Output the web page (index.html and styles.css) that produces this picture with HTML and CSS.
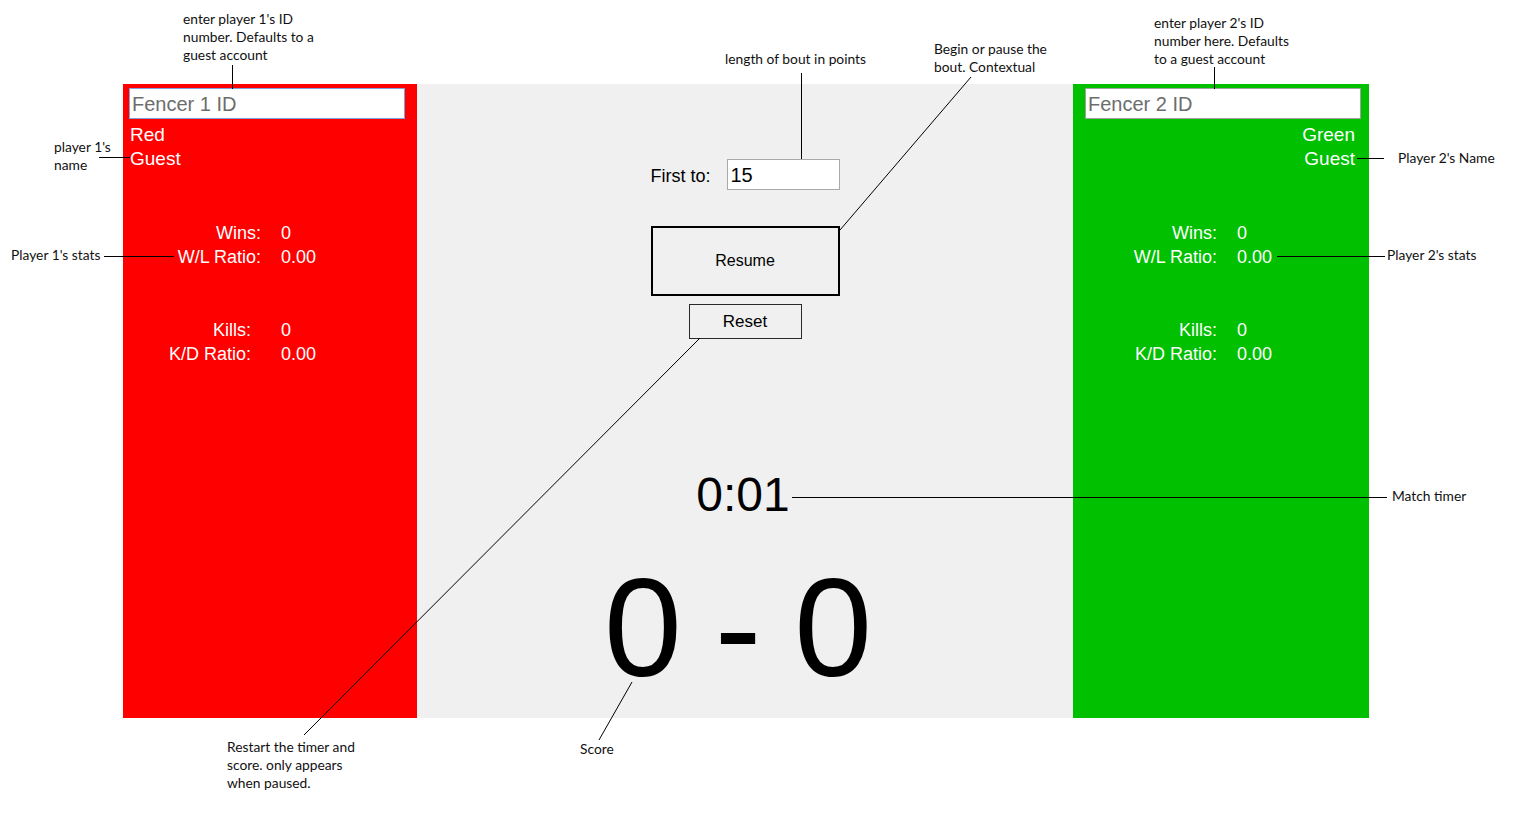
FILE: index.html
```html
<!DOCTYPE html>
<html lang="en">
<head>
<meta charset="utf-8">
<title>Fencing scoreboard</title>
<link rel="stylesheet" href="styles.css">
</head>
<body>
<div class="page">
  <div class="board">
    <section class="panel panel-red">
      <input class="fencer-input fencer-input-focus" type="text" placeholder="Fencer 1 ID">
      <div class="name">Red<br>Guest</div>
      <div class="stats stats-red">
        <span class="lbl">Wins:</span><span class="val">0</span>
        <span class="lbl">W/L Ratio:</span><span class="val">0.00</span>
      </div>
      <div class="stats stats-red stats-second">
        <span class="lbl lbl-shift">Kills:</span><span class="val">0</span>
        <span class="lbl lbl-shift">K/D Ratio:</span><span class="val">0.00</span>
      </div>
    </section>

    <section class="panel-center">
      <div class="first-to">
        <span class="first-label">First to:</span>
        <input class="bout-input" type="text" value="15">
      </div>
      <button class="btn-resume" type="button">Resume</button>
      <button class="btn-reset" type="button">Reset</button>
      <div class="timer">0:01</div>
      <div class="score">0 - 0</div>
    </section>

    <section class="panel panel-green">
      <input class="fencer-input" type="text" placeholder="Fencer 2 ID">
      <div class="name name-right">Green<br>Guest</div>
      <div class="stats stats-green">
        <span class="lbl">Wins:</span><span class="val">0</span>
        <span class="lbl">W/L Ratio:</span><span class="val">0.00</span>
      </div>
      <div class="stats stats-green stats-second">
        <span class="lbl">Kills:</span><span class="val">0</span>
        <span class="lbl">K/D Ratio:</span><span class="val">0.00</span>
      </div>
    </section>
  </div>

  <svg class="leaders" width="1518" height="826" viewBox="0 0 1518 826" aria-hidden="true">
    <g stroke="#000" stroke-width="1" fill="none">
      <line x1="232.5" y1="65" x2="232.5" y2="89"/>
      <line x1="99" y1="157.5" x2="130" y2="157.5"/>
      <line x1="104" y1="256.5" x2="174" y2="256.5"/>
      <line x1="801.5" y1="73" x2="801.5" y2="159"/>
      <line x1="971" y1="77" x2="840" y2="230"/>
      <line x1="1214.5" y1="67" x2="1214.5" y2="89"/>
      <line x1="1357" y1="158.5" x2="1384" y2="158.5"/>
      <line x1="1277" y1="256.5" x2="1385" y2="256.5"/>
      <line x1="792" y1="497.5" x2="1387" y2="497.5"/>
      <line x1="700" y1="338" x2="304" y2="735"/>
      <line x1="632" y1="682" x2="599" y2="740"/>
    </g>
  </svg>

  <p class="note note-id1">enter player 1's ID<br>number. Defaults to a<br>guest account</p>
  <p class="note note-name1">player 1's<br>name</p>
  <p class="note note-stats1">Player 1's stats</p>
  <p class="note note-bout">length of bout in points</p>
  <p class="note note-begin">Begin or pause the<br>bout. Contextual</p>
  <p class="note note-id2">enter player 2's ID<br>number here. Defaults<br>to a guest account</p>
  <p class="note note-name2">Player 2's Name</p>
  <p class="note note-stats2">Player 2's stats</p>
  <p class="note note-timer">Match timer</p>
  <p class="note note-reset">Restart the timer and<br>score. only appears<br>when paused.</p>
  <p class="note note-score">Score</p>
</div>
</body>
</html>
```

FILE: styles.css
```css
* { box-sizing: border-box; }

html, body {
  margin: 0;
  padding: 0;
  background: #ffffff;
}

body {
  font-family: "Liberation Sans", Arial, sans-serif;
  color: #000;
}

.page {
  position: relative;
  width: 1518px;
  height: 826px;
  overflow: hidden;
}

.board {
  display: flex;
  margin: 0 0 0 123px;
  padding-top: 84px;
  height: 718px;
}

.panel {
  height: 634px;
  color: #ffffff;
  padding-top: 4px;
}

.panel-red {
  width: 294px;
  background: #ff0000;
  padding-left: 6px;
  padding-right: 12px;
}

.panel-green {
  width: 296px;
  background: #00c000;
  padding-left: 12px;
  padding-right: 8px;
}

.fencer-input {
  display: block;
  width: 276px;
  height: 31px;
  margin: 0;
  padding: 1px 2px 0;
  border: 1px solid #a0a0a0;
  border-radius: 0;
  background: #ffffff;
  font-family: "Liberation Sans", Arial, sans-serif;
  font-size: 20px;
  color: #000;
  outline: none;
}

.fencer-input-focus {
  border-color: #7fa2d6;
}

.fencer-input::placeholder {
  color: #6d6d6d;
  opacity: 1;
}

.name {
  margin-top: 4px;
  padding-left: 1px;
  font-size: 19px;
  line-height: 24px;
}

.name-right {
  text-align: right;
  padding-left: 0;
  padding-right: 6px;
}

.stats {
  display: grid;
  grid-template-columns: 132px auto;
  column-gap: 20px;
  font-size: 18px;
  line-height: 24px;
  margin-top: 50px;
}

.stats-second {
  margin-top: 49px;
}

.lbl {
  text-align: right;
}

.lbl-shift {
  padding-right: 10px;
}

.panel-center {
  width: 656px;
  height: 634px;
  background: #f0f0f0;
  display: flex;
  flex-direction: column;
  align-items: center;
  padding-top: 75px;
}

.first-to {
  width: 189px;
  height: 31px;
  display: flex;
  justify-content: space-between;
  align-items: center;
}

.first-label {
  font-size: 18px;
  padding-top: 3px;
}

.bout-input {
  width: 113px;
  height: 31px;
  margin: 0;
  padding: 1px 3px 0;
  border: 1px solid #a9a9a9;
  border-radius: 0;
  background: #ffffff;
  font-family: "Liberation Sans", Arial, sans-serif;
  font-size: 20px;
  color: #000;
  outline: none;
}

.btn-resume {
  margin-top: 36px;
  width: 189px;
  height: 70px;
  border: 2px solid #000;
  border-radius: 0;
  background: transparent;
  font-family: "Liberation Sans", Arial, sans-serif;
  font-size: 16px;
  color: #000;
  padding: 0;
}

.btn-reset {
  margin-top: 8px;
  width: 113px;
  height: 35px;
  border: 1px solid #2a2a2a;
  border-radius: 0;
  background: transparent;
  font-family: "Liberation Sans", Arial, sans-serif;
  font-size: 17px;
  color: #000;
  padding: 0;
}

.timer {
  margin-top: 132px;
  font-size: 48px;
  line-height: 48px;
  padding-right: 4px;
}

.score {
  margin-top: 39px;
  font-size: 140px;
  line-height: 140px;
  word-spacing: -6px;
  padding-right: 14px;
}

.leaders {
  position: absolute;
  top: 0;
  left: 0;
  pointer-events: none;
}

.note {
  position: absolute;
  margin: 0;
  font-family: Lato, "Open Sans", sans-serif;
  font-size: 13.8px;
  line-height: 18px;
  color: #111;
  white-space: nowrap;
}

.note-id1 { left: 183px; top: 10px; }
.note-name1 { left: 54px; top: 138px; }
.note-stats1 { left: 11px; top: 246px; }
.note-bout { left: 725px; top: 50px; }
.note-begin { left: 934px; top: 40px; }
.note-id2 { left: 1154px; top: 14px; }
.note-name2 { left: 1398px; top: 149px; }
.note-stats2 { left: 1387px; top: 246px; }
.note-timer { left: 1392px; top: 487px; }
.note-reset { left: 227px; top: 738px; }
.note-score { left: 580px; top: 740px; }
```
